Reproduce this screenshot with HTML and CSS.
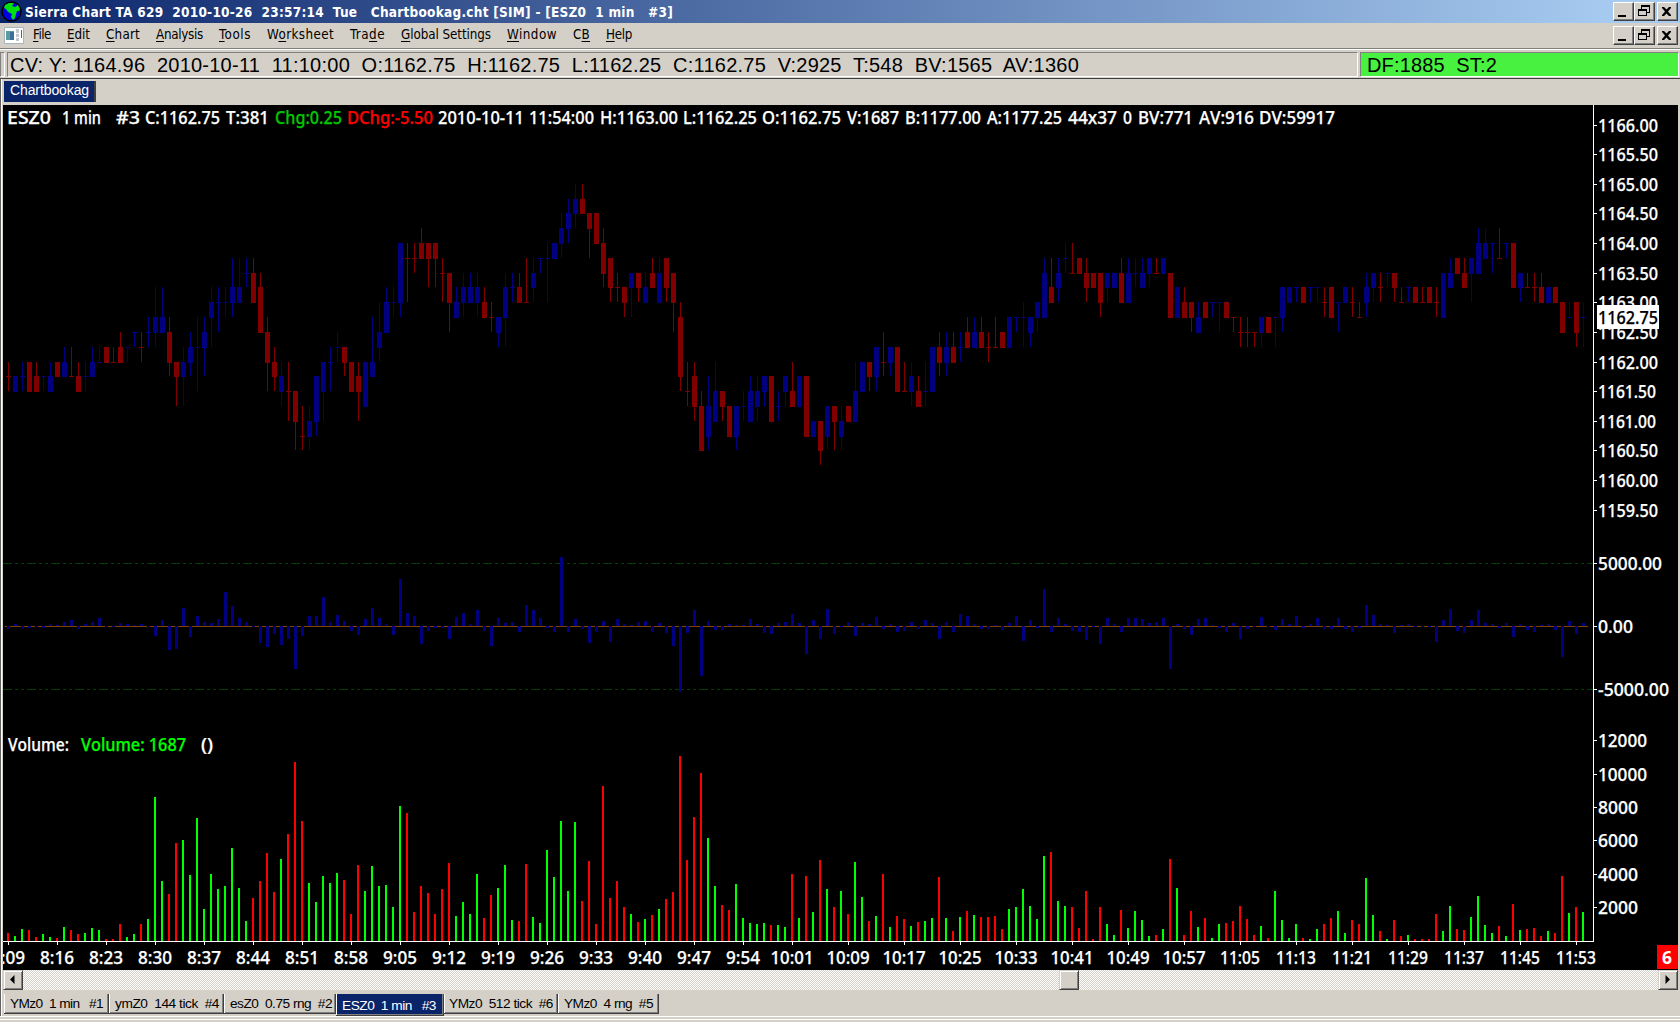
FILE: index.html
```html
<!DOCTYPE html>
<html lang="en">
<head>
<meta charset="utf-8">
<title>Sierra Chart TA 629</title>
<link rel="stylesheet" href="styles.css">
</head>
<body>
<svg class="defs" width="0" height="0" aria-hidden="true">
  <symbol id="i-min" viewBox="0 0 20 18"><path d="M5 13h8v2H5z"/></symbol>
  <symbol id="i-restore" viewBox="0 0 20 18"><path fill-rule="evenodd" d="M7 3h9v8h-3v-1h2V5H8v2H7zM4 7h9v7H4zM5 9v4h7V9z"/></symbol>
  <symbol id="i-close" viewBox="0 0 20 18"><path d="M5 5h2l2.500 2.500L12 5h2v1l-3 3.500 3 3.500v1h-2l-2.500-2.500L7 14H5v-1l3-3.500L5 6z"/></symbol>
</svg>
<div class="app">
  <header class="titlebar">
    <svg class="globe" width="21" height="21" viewBox="0 0 21 21"><circle cx="10.500" cy="10.500" r="9.500" fill="#0000e0" stroke="#000" stroke-width="1.500"/><path fill="#00e010" d="M4 4l4-2 5 0-2 3 3 1 3-2 2 4-1 2-2 0-1 3-1 4-2 2-2-3 1-3-4-2-2-3-2-1z"/></svg>
    <h1 class="title" data-width="648">Sierra Chart TA 629&nbsp; 2010-10-26&nbsp; 23:57:14&nbsp; Tue&nbsp;&nbsp; Chartbookag.cht [SIM] - [ESZ0&nbsp; 1 min&nbsp;&nbsp; #3]</h1>
    <div class="controls"><button><svg viewBox="0 0 20 18"><use href="#i-min"/></svg></button><button><svg viewBox="0 0 20 18"><use href="#i-restore"/></svg></button><button class="close"><svg viewBox="0 0 20 18"><use href="#i-close"/></svg></button></div>
  </header>
  <nav class="menubar">
    <svg class="docicon" width="20" height="17" viewBox="0 0 20 17"><path fill="#fff" stroke="#a8b4c0" d="M.5.5h19v16H.5z"/><path fill="#5b9aa0" d="M2 4h8v9H2z"/><path fill="#3d6f9b" d="M6 5h4v8H6z"/><path fill="#c3c8ce" d="M12 2h3v4h-3zM12 7h3v3h-3zM12 11h3v3h-3z"/><path fill="#2a8060" d="M17 3h1v8h-1z"/></svg>
    <span data-width="18"><u>F</u>ile</span>
    <span data-width="23"><u>E</u>dit</span>
    <span data-width="34"><u>C</u>hart</span>
    <span data-width="47"><u>A</u>nalysis</span>
    <span data-width="32"><u>T</u>ools</span>
    <span data-width="67">W<u>o</u>rksheet</span>
    <span data-width="35">Tra<u>d</u>e</span>
    <span data-width="90"><u>G</u>lobal Settings</span>
    <span data-width="50"><u>W</u>indow</span>
    <span data-width="17">C<u>B</u></span>
    <span data-width="26"><u>H</u>elp</span>
    <div class="controls"><button><svg viewBox="0 0 20 18"><use href="#i-min"/></svg></button><button><svg viewBox="0 0 20 18"><use href="#i-restore"/></svg></button><button class="close"><svg viewBox="0 0 20 18"><use href="#i-close"/></svg></button></div>
  </nav>
  <section class="values">
    <div class="grip"></div>
    <div class="readout"><span data-width="1069">CV: Y: 1164.96&nbsp; 2010-10-11&nbsp; 11:10:00&nbsp; O:1162.75&nbsp; H:1162.75&nbsp; L:1162.25&nbsp; C:1162.75&nbsp; V:2925&nbsp; T:548&nbsp; BV:1565&nbsp; AV:1360</span></div>
    <div class="feed"><span data-width="130">DF:1885&nbsp; ST:2</span></div>
  </section>
  <main class="book">
    <div class="booktabs"><div class="booktab"><span data-width="79">Chartbookag</span></div></div>
    <svg class="chart" id="chart" width="1675" height="865" viewBox="3 105 1675 865"></svg>
    <div class="scroll">
      <button class="arrow"><svg width="6" height="10"><path d="M5.500 0v9L1 4.500z"/></svg></button>
      <i class="thumb"></i>
      <button class="arrow right"><svg width="6" height="10"><path d="M.5 0v9L5 4.500z"/></svg></button>
    </div>
    <div class="tabs">
      <div class="tab t1"><span data-width="93">YMz0&nbsp; 1 min&nbsp;&nbsp; #1</span></div>
      <div class="tab t2"><span data-width="104">ymZ0&nbsp; 144 tick&nbsp; #4</span></div>
      <div class="tab t3"><span data-width="102">esZ0&nbsp; 0.75 rng&nbsp; #2</span></div>
      <div class="tab t4 selected"><span data-width="94">ESZ0&nbsp; 1 min&nbsp;&nbsp; #3</span></div>
      <div class="tab t5"><span data-width="104">YMz0&nbsp; 512 tick&nbsp; #6</span></div>
      <div class="tab t6"><span data-width="89">YMz0&nbsp; 4 rng&nbsp; #5</span></div>
    </div>
  </main>
  <footer class="edge"></footer>
</div>
<script src="chart.js"></script>
</body>
</html>
```
FILE: styles.css
```css
* { box-sizing: border-box; }
body { margin: 0; background: #d4d0c8; color: #000; overflow: hidden; font-kerning: none; }
.defs { position: absolute; }
.app { width: 1680px; height: 1022px; display: flex; flex-direction: column; background: #d4d0c8; }
[data-width] { white-space: nowrap; display: block; flex: none; }

.titlebar { height: 23px; flex: none; display: flex; align-items: center; padding: 0 2px 0 1px; gap: 3px; background: linear-gradient(90deg, #0a246a, #a6caf0 96%); }
.globe { flex: none; }
.title { margin: 0; color: #fff; font: bold 13.5px/22px "DejaVu Sans Condensed", "DejaVu Sans", sans-serif; }
.controls { margin-left: auto; display: flex; height: 19px; }
.controls button { width: 21px; height: 19px; padding: 0; border: 1px solid; border-color: #fff #404040 #404040 #fff; box-shadow: inset -1px -1px #808080; background: #d4d0c8; display: block; }
.controls .close { margin-left: 2px; }
.controls svg { width: 20px; height: 18px; display: block; margin: -1px 0 0 -1px; }

.menubar { height: 27px; flex: none; display: flex; gap: 16px; padding: 0 2px 0 4px; border-bottom: 1px solid #fff; box-shadow: inset 0 -1px #808080; font: 13.3px/20px "DejaVu Sans Condensed", "DejaVu Sans", sans-serif; }
.menubar > span { padding-top: 2px; }
.menubar .docicon { margin: 4px -7px 0 0; flex: none; }
.menubar .controls { margin-top: 3px; }
.menubar u { text-underline-offset: 2px; }

.values { height: 27px; flex: none; padding-top: 2px; display: flex; gap: 2px; font: 20px/23px "Liberation Sans", Arial, sans-serif; }
.values > div { border: 1px solid; border-color: #808080 #fff #fff #808080; padding-top: 1px; }
.grip { width: 5px; margin-left: 0; }
.readout { width: 1351px; padding-left: 2px; }
.values .feed { width: 319px; padding-left: 6px; background: #48f040; }

.book { height: 938px; flex: none; margin-top: 1px; border-top: 1px solid #404040; border-left: 1px solid #606060; padding: 0 2px 0 2px; box-shadow: inset 1px 0 #fff; }
.booktabs { height: 26px; padding: 2px 0 0 1px; display: flex; }
.booktab { height: 21px; width: 92px; padding-left: 6px; background: #0a246a; color: #fff; border-right: 2px solid #404040; font: 14px/19px "Liberation Sans", Arial, sans-serif; }
.chart { display: block; background: #000; }
.scroll { height: 20px; display: flex; background: repeating-conic-gradient(#fff 0 25%, #d4d0c8 0 50%) 0 0 / 2px 2px; }
.scroll button, .thumb { flex: none; width: 20px; height: 20px; padding: 0; border: 1px solid; border-color: #d4d0c8 #404040 #404040 #d4d0c8; box-shadow: inset 1px 1px #fff, inset -1px -1px #808080; background: #d4d0c8; }
.scroll button { display: flex; align-items: center; justify-content: center; padding-right: 3px; }
.thumb { margin-left: 1036px; }
.scroll .right { margin-left: auto; padding: 0; }
.tabs { display: flex; height: 27px; padding: 4px 0 0 1px; font: 13.7px/20px "Liberation Sans", Arial, sans-serif; }
.tab { height: 20px; padding-left: 6px; border: 0 solid #404040; border-right-width: 1px; border-bottom-width: 1px; box-shadow: inset 1px 0 #fff, inset -1px -1px #808080; flex: none; }
.t1 { width: 105px; }
.t2 { width: 115px; }
.t3 { width: 112px; }
.t4 { width: 108px; }
.t5 { width: 114px; padding-left: 5px; }
.t6 { width: 101px; }
.tab.selected { height: 22px; line-height: 23px; background: #0a246a; color: #fff; }
.edge { flex: none; height: 5px; border-top: 1px solid #fff; box-shadow: inset 0 2px #d4d0c8, inset 0 3px #fff; }

.chart text { font-family: "Noto Sans", sans-serif; font-size: 17.5px; font-weight: 500; fill: #fff; stroke: #fff; stroke-width: .25px; white-space: pre; }
.chart .up { fill: #000080; }
.chart .down { fill: #800000; }
.chart .vup { fill: #00ff00; }
.chart .vdown { fill: #ff0000; }
.chart text.green { fill: #00c800; stroke: #00c800; }
.chart text.lime { fill: #00ff00; stroke: #00ff00; }
.chart text.red { fill: #ff0000; stroke: #ff0000; }
.chart text.dark { fill: #000; stroke: #000; }
.chart text.bold { font-weight: bold; stroke: none; }
.chart .line { fill: #fff; }
.chart .zero { fill: #804000; }
.chart .limit { stroke: #004000; stroke-dasharray: 9 3 3 3 3 3; }
.chart .alert { fill: #f00; }
```
FILE: chart.js
```js
// Quarter-point price levels, top (1165.00) to bottom, in pixels.
const LEVEL = {};
[184,199,213,228,243,258,273,287,302,317,332,347,362,376,391,406,421,436,450,465]
  .forEach((y, i) => LEVEL[String.fromCharCode(97 + i)] = y);

// One bar a minute: direction, then the levels of high, body top, body bottom, low.
const bars = `rmnno bnnoo bmnno rmmoo rmnoo bnnno bmnoo rmmnn blmnn rlnnn rmnoo bmnno blmnn blmmm rllmm rlmmm rklmm blllm bkkkl rkllm
bjkkl bhjkl bhjkk rjkmn rmmnp blmnp bklmn bjllo bjkln bhijl bhiik bhiij bfhij bfhii bfggh rfgii rghkk rjkmo rlmno bmnop
rmooq rooqs rprrs bpqrs bnnqr bmmoq blmmo bkllm rllmn rmmoo rmnoq bmmpp bjmnn biklm bhikk bhiij beeij reffi reffg rdeff
reefh reefh rfggi rggik bhijj bghij bghii bghij rhijj rijjk bjjkl bghjl bghhi rghii rfiii bfghi bfffg beffi beeff bcdef
bbcde babcd rabcc rccdf rccee rdegh rffhi rghhi rhhij bgghj rgghi bghii rfghh bfgii rffhi rggik rijno rmoop rmnpq ropss
bnprs bmoqq roopq rpprr bpprs boppq bnoqq bnopq bnnop rnnqq boppq bnnop rmopp bnnpp rnnrr bqqrr rqqst bpprs rppqs bpqrs
rppqq bmoqq bmmoo rmmno bllno rkmmn bllmn rlloo rmooo bmnop rnopp bmoop blloo rklmn bklmn rklmm bkllm rjkll bjkll rjkll
rkllm rjlll rkkll bjjll bjjjk bijjl bjjkl biijk bfgjj rfhii bfghi beffg reggg rffgg rfghi rgghh rggij bgghi bgghh rfgii
bfgii bfggh bfghh bffgh rfggg bffgg rggjj bhhjj rhijj riijk bijkk riijj biiij biiik riijj rjjjk rjkkl rjkkl rkkkl bjjkl
rjjkk bjjjl bhhjk bhhii bhhhi rhhii bhhhi bhhhi rhiij rhhjj biiik bhhii rhiij rijjj bghij bgghi rghhi bgggh rgghi rhiii
bhhhi rhhii rhiii rhhii rhiij bggjj bfghh rffgg rfghh bffgi bdegg bdeff beeeg rdfff beeef reehh bgghi rghhh rghhi rghii
bhhii rhhii riikk bijjj riikl bijjl`.split(/\s+/);

// Bid/ask volume difference and volume of each bar, in pixels.
const delta = [-3,2,-3,-2,-1,-2,2,1,4,6,-3,2,4,8,-1,-1,3,2,1,2,-1,-10,6,-24,-23,18,-11,10,4,3,7,34,20,8,4,-1,-17,-21,-8,-19,
-13,-43,-10,10,10,29,4,11,5,-5,-9,7,18,8,2,-9,47,13,10,-18,-5,-2,-2,-13,9,13,2,16,-5,-20,8,3,4,-6,21,16,8,-2,-6,69,
-6,7,-3,-17,-6,5,-16,7,2,1,4,5,-6,3,-7,-20,-66,-7,16,-50,5,-4,-4,2,1,1,7,2,-7,-8,3,4,12,3,-28,6,-13,17,-8,-1,
4,-10,3,2,9,-3,2,-6,-5,4,-3,6,3,-13,4,-6,12,10,2,-3,-3,1,-4,3,10,-15,6,-2,37,-6,8,2,-5,-6,-14,-1,-18,8,2,-6,
8,8,7,3,4,8,-43,2,-3,-9,7,8,1,-2,-6,3,-13,-3,-1,9,-1,-4,7,2,10,-2,2,8,-3,-3,8,-3,-6,-2,21,11,2,1,-7,1,
2,-1,-1,-1,-16,6,17,-5,-7,6,16,3,2,-2,3,-11,2,-4,-6,1,2,-4,-31,5,-8,3];
const volume = [8,5,12,11,4,7,4,3,14,11,7,8,13,11,2,2,17,4,7,17,22,144,60,47,98,101,66,123,32,67,52,55,93,53,20,43,60,88,49,82,
107,179,120,58,39,65,58,68,61,27,76,50,75,55,56,34,135,128,29,55,48,27,52,78,25,39,27,67,23,46,53,76,21,20,77,24,18,91,64,120,
50,119,40,80,17,155,43,60,34,27,19,22,26,32,42,49,185,81,124,168,103,55,36,31,57,23,18,17,18,16,16,14,67,23,65,29,81,52,34,50,
27,79,44,20,25,67,14,25,22,15,19,20,23,64,23,10,24,30,26,24,24,25,12,32,34,52,35,22,85,89,40,35,34,13,50,2,34,17,6,31,
13,30,21,5,6,12,82,53,6,30,14,23,3,17,18,20,35,22,6,15,3,50,21,3,17,3,2,12,17,23,30,8,21,17,63,26,10,2,21,5,
6,2,2,2,27,10,35,12,11,24,45,16,8,15,5,37,11,12,13,5,10,8,65,28,34,29];

let out = '';
const rect = (x, y, w, h, c) => { out += `<rect x="${x}" y="${y}" width="${w}" height="${h}" class="${c}"/>`; };
const text = (s, x, y, w, c = '') => {
  out += `<text x="${x}" y="${y}" textLength="${w}" lengthAdjust="spacingAndGlyphs" class="${c}">${s}</text>`;
};

for (const y of [563.5, 689.5]) out += `<path class="limit" d="M3 ${y}H1593"/>`;
rect(5, 626, 1583, 1, 'zero');
bars.forEach((b, i) => {
  const x = 8 + 7 * i, c = b[0] === 'b' ? 'up' : 'down';
  const [hi, top, bottom, lo] = [...b.slice(1)].map(k => LEVEL[k]);
  if (lo > hi) rect(x, hi, 1, lo - hi, c);
  rect(x - 2, top, 5, bottom - top + 1, c);
  const d = delta[i];
  rect(x - 1, d > 0 ? 626 - d : 626, 3, Math.abs(d), 'up');
  rect(x - 1, 941 - volume[i], 2, volume[i], 'v' + c);
});

// Axes
rect(1593, 105, 1, 837, 'line');
rect(3, 941, 1591, 1, 'line');
const tickLabel = (s, y, w) => { rect(1594, y, 3, 1, 'line'); text(s, 1598, y + 7, w + 1); };
[125,154,184,213,243,273,302,332,362,391,421,450,480,510].forEach((y, i) => {
  const s = (1166 - i / 2).toFixed(2);
  tickLabel(s, y, s.startsWith('1161') ? 57 : 59);
});
tickLabel('5000.00', 563, 63);
tickLabel('0.00', 626, 34);
tickLabel('-5000.00', 689, 70);
tickLabel('12000', 740, 48);
tickLabel('10000', 774, 48);
tickLabel('8000', 807, 39);
tickLabel('6000', 840, 39);
tickLabel('4000', 874, 39);
tickLabel('2000', 907, 39);
rect(1597, 305, 62, 24, 'line');
text('1162.75', 1598, 324, 60, 'dark');

'8:09 8:16 8:23 8:30 8:37 8:44 8:51 8:58 9:05 9:12 9:19 9:26 9:33 9:40 9:47 9:54 10:01 10:09 10:17 10:25 10:33 10:41 10:49 10:57 11:05 11:13 11:21 11:29 11:37 11:45 11:53'
  .split(' ').forEach((s, i) => {
    const x = i < 17 ? 8 + 49 * i : 792 + 56 * (i - 16);
    const w = s.length === 4 ? 34 : s.startsWith('11') ? 40 : 43;
    rect(x, 942, 1, 3, 'line');
    text(s, x - w / 2, 964, w);
  });
rect(1657, 945, 21, 24, 'alert');
text('6', 1662, 964, 10, 'bold');

// Header and volume captions
[['ESZ0', 7, 44], ['1 min', 62, 39], ['#3', 116, 24], ['C:1162.75', 145, 75], ['T:381', 226, 43], ['Chg:0.25', 275, 67, 'green'],
 ['DChg:-5.50', 347, 86, 'red'], ['2010-10-11', 438, 86], ['11:54:00', 529, 65], ['H:1163.00', 600, 78], ['L:1162.25', 683, 74],
 ['O:1162.75', 762, 79], ['V:1687', 847, 52], ['B:1177.00', 905, 76], ['A:1177.25', 987, 75], ['44x37', 1068, 49], ['0', 1123, 9],
 ['BV:771', 1138, 55], ['AV:916', 1199, 55], ['DV:59917', 1259, 76]].forEach(([s, x, w, c]) => text(s, x, 124, w, c));
text('Volume:', 8, 751, 61);
text('Volume: 1687', 81, 751, 105, 'lime');
text('()', 201, 751, 12);
document.getElementById('chart').innerHTML = out;

// Spread each caption over its allotted width.
document.querySelectorAll('[data-width]').forEach(el => {
  const want = +el.dataset.width;
  const r = document.createRange();
  r.selectNodeContents(el);
  const n = el.textContent.length;
  el.style.letterSpacing = ((want - r.getBoundingClientRect().width) / n) + 'px';
  el.style.width = want + 'px';
});
```
